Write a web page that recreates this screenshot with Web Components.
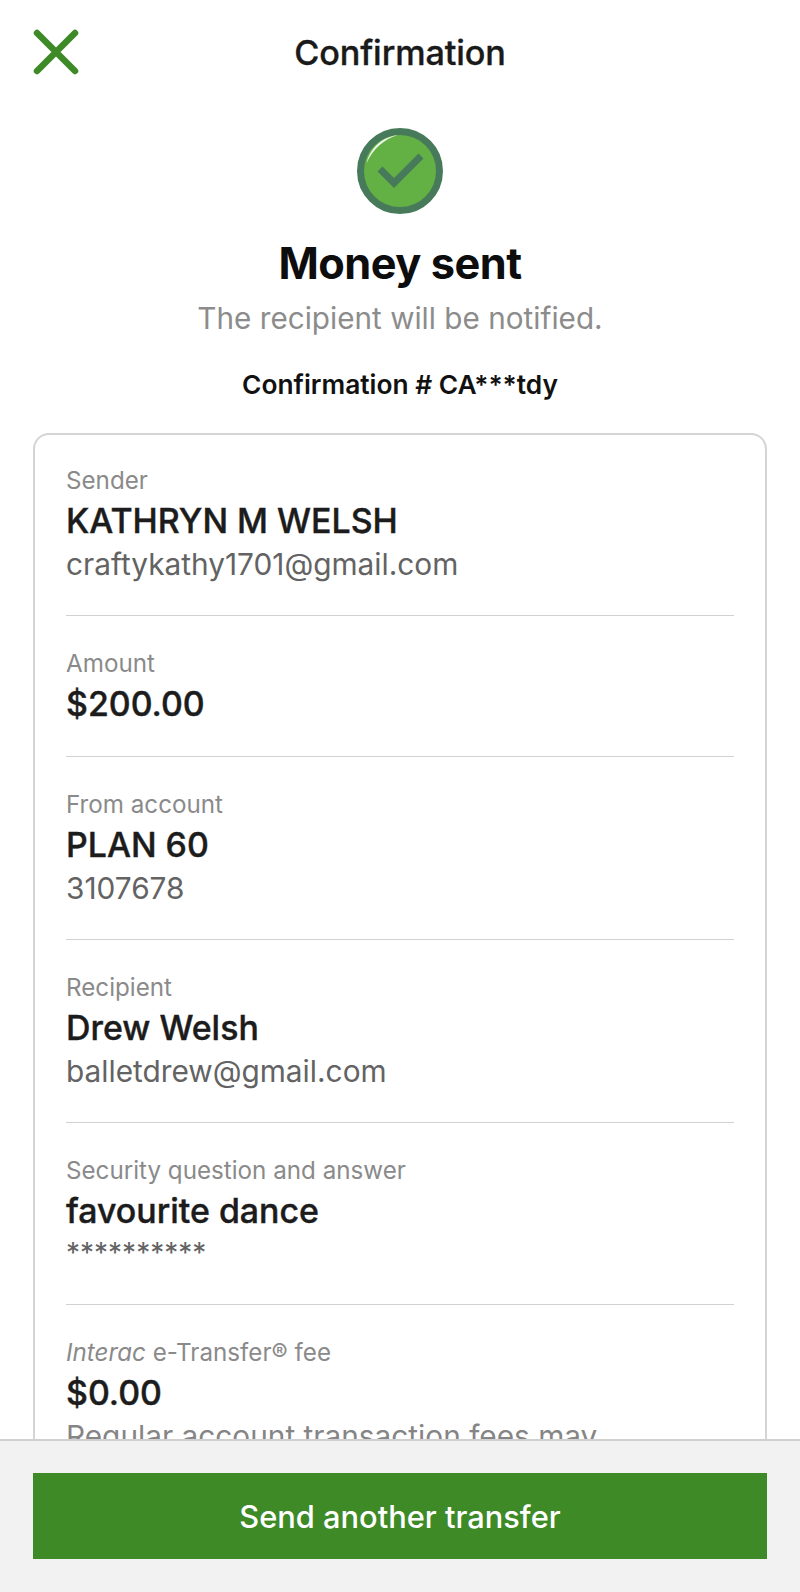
<!DOCTYPE html>
<html>
<head>
<meta charset="utf-8">
<title>Confirmation</title>
<style>
  html, body { margin: 0; padding: 0; background: #fff; }
  body { font-family: Inter, "Noto Sans", sans-serif; }
</style>
</head>
<body>
<transfer-screen>
  <nav-header slot="header" title="Confirmation"></nav-header>
  <status-banner heading="Money sent" sub="The recipient will be notified." ref="Confirmation # CA***tdy"></status-banner>
  <detail-card>
    <detail-row label="Sender" value="KATHRYN M WELSH" note="craftykathy1701@gmail.com"></detail-row>
    <detail-row label="Amount" value="$200.00" compact></detail-row>
    <detail-row label="From account" value="PLAN 60" note="3107678"></detail-row>
    <detail-row label="Recipient" value="Drew Welsh" note="balletdrew@gmail.com"></detail-row>
    <detail-row label="Security question and answer" value="favourite dance" note="**********" masked></detail-row>
    <detail-row value="$0.00" note="Regular account transaction fees may apply." last><span slot="label"><i>Interac</i> e-Transfer® fee</span></detail-row>
  </detail-card>
  <action-bar slot="footer" text="Send another transfer"></action-bar>
</transfer-screen>

<script>
class TransferScreen extends HTMLElement {
  constructor() {
    super();
    this.attachShadow({ mode: 'open' }).innerHTML = `
    <style>
      :host { display: flex; flex-direction: column; height: 1592px; overflow: hidden; background: #fff; }
      .content { flex: 1; min-height: 0; overflow: hidden; }
    </style>
    <div class="content">
      <slot name="header"></slot>
      <slot></slot>
    </div>
    <slot name="footer"></slot>
    `
  }
}

class NavHeader extends HTMLElement {
  constructor() {
    super();
    this.attachShadow({ mode: 'open' }).innerHTML = `
    <style>
      :host { display: flex; align-items: center; justify-content: center; height: 104px; position: relative; }
      .title { font-size: 34.2px; font-weight: 500; color: #1a1a1a; letter-spacing: -0.1px; -webkit-text-stroke: 0.35px #1a1a1a; }
      button { position: absolute; left: 33px; top: 29px; width: 46px; height: 46px; padding: 0; border: 0; background: none; }
      svg { display: block; }
    </style>
    <button aria-label="Close">
      <svg width="46" height="46" viewBox="0 0 46 46">
        <path d="M4 4 L42 42 M42 4 L4 42" stroke="#3e8a27" stroke-width="6.5" stroke-linecap="round" fill="none"/>
      </svg>
    </button>
    <div class="title"></div>
    `
    this.shadowRoot.querySelector(".title").textContent = this.getAttribute("title")
  }
}

class StatusBanner extends HTMLElement {
  constructor() {
    super();
    this.attachShadow({ mode: 'open' }).innerHTML = `
    <style>
      :host { display: flex; flex-direction: column; align-items: center; }
      svg { display: block; margin-top: 23px; }
      .heading { margin-top: 22px; font-size: 43.3px; line-height: 52px; font-weight: 700; color: #0d0d0d; letter-spacing: -0.5px; }
      .sub { margin-top: 8px; font-size: 29.7px; line-height: 42px; color: #8c8c8c; }
      .ref { margin-top: 29px; font-size: 26.3px; line-height: 34px; font-weight: 600; color: #111; }
    </style>
    <svg width="88" height="88" viewBox="0 0 88 88">
      <circle cx="44" cy="44" r="39.5" fill="#63b044" stroke="#477a5a" stroke-width="7"/>
      <path d="M10.5 36 C 14 22 25 10 42 8 C 28 12 17 22 10.5 36 Z" fill="#eef6e9"/>
      <path d="M24 42 L38 56 L65 29" stroke="#477a5a" stroke-width="7" fill="none"/>
    </svg>
    <div class="heading"></div>
    <div class="sub"></div>
    <div class="ref"></div>
    `
    let root = this.shadowRoot
    root.querySelector(".heading").textContent = this.getAttribute("heading")
    root.querySelector(".sub").textContent = this.getAttribute("sub")
    root.querySelector(".ref").textContent = this.getAttribute("ref")
  }
}

class DetailCard extends HTMLElement {
  constructor() {
    super();
    this.attachShadow({ mode: 'open' }).innerHTML = `
    <style>
      :host { display: block; margin: 31px 33px 0; padding: 0 31px; border: 2px solid #d4d4d4; border-radius: 16px; background: #fff; }
    </style>
    <slot></slot>
    `
  }
}

class DetailRow extends HTMLElement {
  constructor() {
    super();
    this.attachShadow({ mode: 'open' }).innerHTML = `
    <style>
      :host { display: block; padding: 33px 0 30px; border-bottom: 1px solid #d2d2d2; }
      :host(:first-child) { padding-top: 31px; }
      :host([compact]) { padding-bottom: 31px; }
      :host([last]) { border-bottom: 0; }
      .label { font-size: 24.2px; line-height: 30px; color: #8a8a8a; }
      .value { margin-top: 4px; font-size: 33.9px; line-height: 42px; font-weight: 500; color: #1c1c1c; -webkit-text-stroke: 0.4px #1c1c1c; }
      .note { margin-top: 1px; font-size: 29.8px; line-height: 42px; color: #636363; }
      :host([masked]) .note { font-size: 28px; line-height: 41px; }
      :host([last]) .note { max-width: 560px; color: #858585; }
    </style>
    <div class="label"><slot name="label"></slot></div>
    <div class="value"></div>
    <div class="note"></div>
    `
    let root = this.shadowRoot
    let label = this.getAttribute("label")
    if (label != null) {
      root.querySelector(".label").textContent = label
    }
    root.querySelector(".value").textContent = this.getAttribute("value")
    let note = this.getAttribute("note")
    if (note != null) {
      root.querySelector(".note").textContent = note
    } else {
      root.querySelector(".note").remove()
    }
  }
}

class ActionBar extends HTMLElement {
  constructor() {
    super();
    this.attachShadow({ mode: 'open' }).innerHTML = `
    <style>
      :host { display: block; flex: none; padding: 32px 33px; height: 153px; box-sizing: border-box; background: #f2f2f2; border-top: 2px solid #d0d0d0; }
      button { display: block; width: 100%; height: 86px; border: 0; background: #3e8a27; color: #fff; font: 500 30.8px Inter, "Noto Sans", sans-serif; }
    </style>
    <button></button>
    `
    this.shadowRoot.querySelector("button").textContent = this.getAttribute("text")
  }
}

customElements.define('transfer-screen', TransferScreen);
customElements.define('nav-header', NavHeader);
customElements.define('status-banner', StatusBanner);
customElements.define('detail-card', DetailCard);
customElements.define('detail-row', DetailRow);
customElements.define('action-bar', ActionBar);
</script>
</body>
</html>
